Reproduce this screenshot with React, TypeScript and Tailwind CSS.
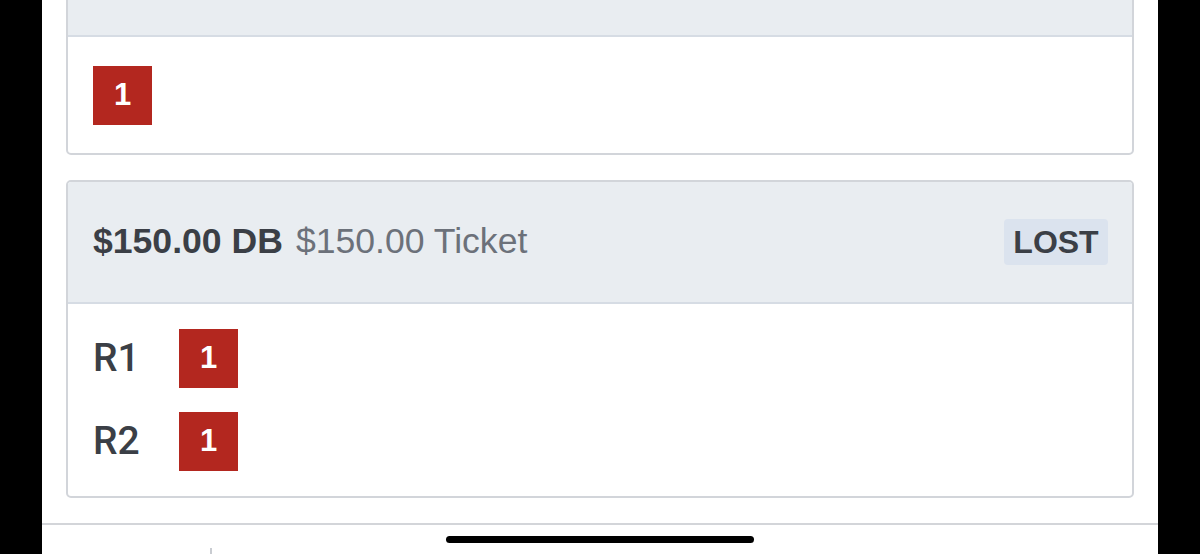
import React from 'react';

const Pick: React.FC<{ n: string }> = ({ n }) => (
  <div className="w-[59px] h-[59px] bg-[#b3271f] text-white flex items-center justify-center font-bold text-[31px] font-['Liberation_Sans',Arial,sans-serif]">
    {n}
  </div>
);

const App: React.FC = () => {
  return (
    <div className="h-[554px] overflow-hidden bg-black flex justify-center">
      <div className="w-[1116px] bg-white flex flex-col font-['Liberation_Sans',Arial,sans-serif]">
        <div className="px-[24px] flex flex-col gap-[25px]">
          {/* previous bet, scrolled mostly out of view */}
          <div className="mt-[-85px] border-2 border-[#d2d5da] rounded-[5px] overflow-hidden">
            <div className="h-[120px] bg-[#e9edf1] border-b-2 border-[#d6dce4]"></div>
            <div className="pl-[25px] pt-[29px] pb-[28px]">
              <Pick n="1" />
            </div>
          </div>

          <div className="border-2 border-[#d2d5da] rounded-[5px] overflow-hidden">
            <div className="h-[122px] bg-[#e9edf1] border-b-2 border-[#d6dce4] flex items-center justify-between pl-[25px] pr-[24px]">
              <div className="text-[35.6px] leading-none">
                <span className="font-bold text-[#3b3f46]">$150.00 DB</span>
                <span className="text-[#6c717a] ml-[13px]">$150.00 Ticket</span>
              </div>
              <div className="w-[104px] h-[46px] rounded-[4px] bg-[#dbe3ee] flex items-center justify-center text-[32px] font-bold text-[#3b3f46]">
                LOST
              </div>
            </div>
            <div className="pl-[25px] pt-[25px] pb-[25px] flex flex-col gap-[24px]">
              {['R1', 'R2'].map(r => (
                <div key={r} className="flex items-center">
                  <span className="w-[86px] text-[39px] font-medium text-[#3b3f46] font-['Roboto',sans-serif] leading-none">{r}</span>
                  <Pick n="1" />
                </div>
              ))}
            </div>
          </div>
        </div>

        <div className="mt-[25px] flex-1 border-t-2 border-[#d3d5d9] relative">
          <div className="absolute left-[168px] bottom-0 w-[2px] h-[6px] bg-[#c9ccd1]"></div>
          <div className="absolute left-[404px] top-[11px] w-[308px] h-[7px] rounded-full bg-black"></div>
        </div>
      </div>
    </div>
  );
};

export default App;
